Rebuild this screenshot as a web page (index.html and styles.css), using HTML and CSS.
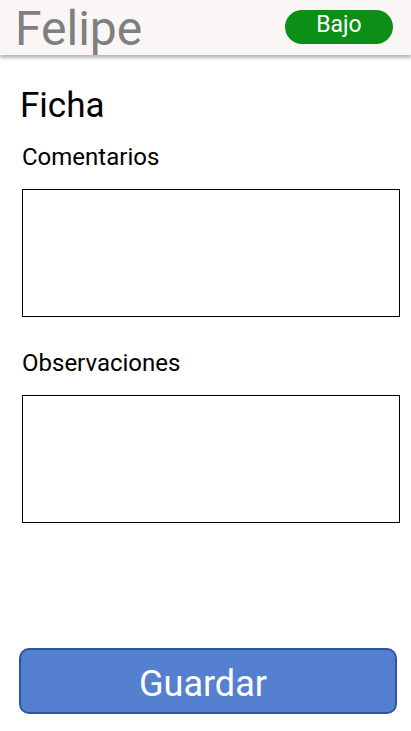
FILE: index.html
```html
<!DOCTYPE html>
<html lang="es">
<head>
<meta charset="utf-8">
<link rel="stylesheet" href="styles.css">
</head>
<body>
<header class="topbar">
  <span class="name">Felipe</span>
  <span class="badge">Bajo</span>
</header>
<main class="content">
  <h1 class="title">Ficha</h1>
  <label class="label">Comentarios</label>
  <div class="box"></div>
  <label class="label label-second">Observaciones</label>
  <div class="box"></div>
  <div class="spacer"></div>
  <button class="save">Guardar</button>
</main>
</body>
</html>
```
FILE: styles.css
```css
html, body {
  margin: 0;
  padding: 0;
  background: #ffffff;
  font-family: Roboto, "Liberation Sans", sans-serif;
}
body {
  width: 411px;
  height: 731px;
  display: flex;
  flex-direction: column;
  overflow: hidden;
}
.topbar {
  height: 55px;
  background: #f9f6f5;
  display: flex;
  align-items: center;
  justify-content: space-between;
  padding: 0 18px 0 15px;
  box-shadow: 0 3px 3px rgba(0,0,0,0.28);
  position: relative;
  z-index: 1;
  flex: none;
}
.name {
  font-size: 48px;
  color: #7f7f7f;
  line-height: 1;
  margin-top: 2px;
}
.badge {
  width: 108px;
  height: 34px;
  border-radius: 17px;
  background: #0b8f17;
  color: #ffffff;
  font-size: 23px;
  display: flex;
  align-items: center;
  justify-content: center;
  margin-top: -2px;
  padding-bottom: 4px;
  box-sizing: border-box;
}
.content {
  flex: 1;
  display: flex;
  flex-direction: column;
  padding: 31px 11px 17px 19px;
}
.title {
  margin: 0 0 0 1px;
  font-size: 35px;
  font-weight: 400;
  line-height: 40px;
  color: #000;
}
.label {
  display: block;
  font-size: 24px;
  margin: 17px 0 0 3px;
  line-height: 28px;
  color: #000;
}
.label-second {
  margin-top: 32px;
}
.box {
  margin: 18px 0 0 3px;
  height: 128px;
  border: 1px solid #000;
  box-sizing: border-box;
}
.spacer { flex: 1; }
.save {
  height: 66px;
  background: #5580d0;
  border: 2px solid #2d54a6;
  border-radius: 10px;
  color: #ffffff;
  font-family: Roboto, "Liberation Sans", sans-serif;
  font-size: 36px;
  padding: 5px 10px 0 0;
  margin-right: 3px;
}
```
